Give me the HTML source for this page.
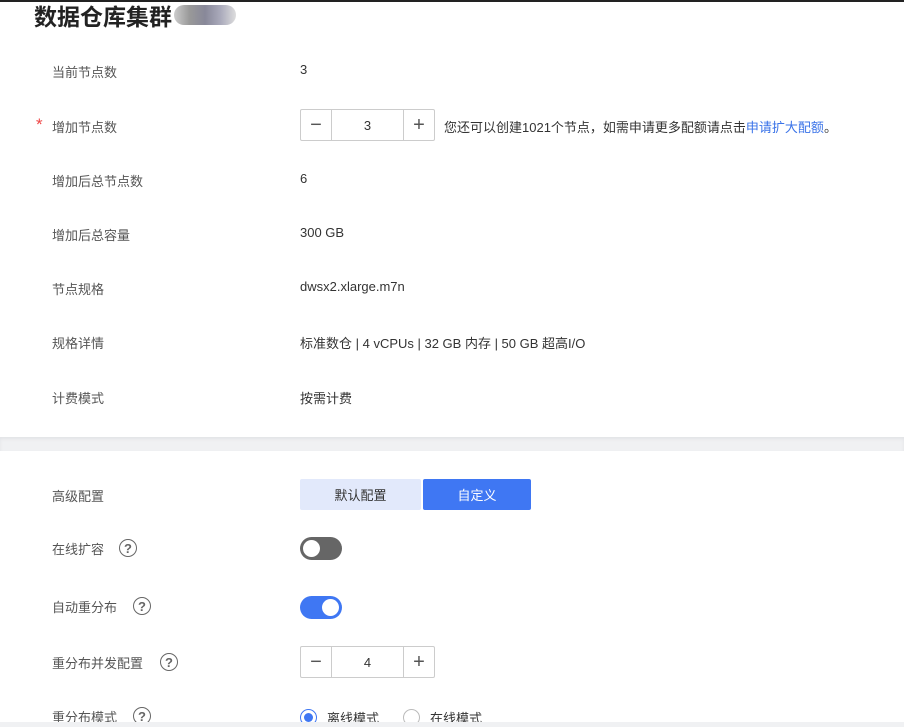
<!DOCTYPE html>
<html><head><meta charset="utf-8"><style>
*{margin:0;padding:0;box-sizing:border-box}
body{width:904px;height:727px;overflow:hidden;background:#fff;font-family:"Liberation Sans","Noto Sans CJK SC",sans-serif;font-size:13px;color:#333;position:relative}
.a{position:absolute;white-space:nowrap}
.l{left:52px;color:#555}
.v{left:300px;color:#333}
.num{position:absolute;left:300px;width:135px;height:32px;border:1px solid #ccc;border-radius:2px;display:flex}
.num span{display:flex;align-items:center;justify-content:center}
.num .b{width:30px;font-size:20px;color:#555}
.num .m{flex:1;border-left:1px solid #ccc;border-right:1px solid #ccc;font-size:13px}
.q{position:absolute;width:18px;height:18px;border:1.8px solid #666;border-radius:50%;font-size:13px;font-weight:bold;color:#666;display:flex;align-items:center;justify-content:center;line-height:1}
.tg{position:absolute;left:300px;width:42px;height:23px;border-radius:12px}
.tg i{position:absolute;top:3px;width:17px;height:17px;border-radius:50%;background:#fff}
</style></head><body>
<div class="a" style="left:0;top:0;width:904px;height:2px;background:#222"></div>
<div class="a" style="left:34px;top:-2px;font-size:23px;font-weight:bold;color:#222">数据仓库集群</div>
<div class="a" style="left:174px;top:5px;width:62px;height:20px;border-radius:10px;background:linear-gradient(90deg,#ccc,#999,#889,#aab,#ddd)"></div>
<div class="a l" style="top:62px">当前节点数</div><div class="a v" style="top:62px">3</div>
<div class="a" style="left:36px;top:115px;color:#e44;font-size:17px">*</div><div class="a l" style="top:117px">增加节点数</div>
<div class="num" style="top:109px"><span class="b">−</span><span class="m">3</span><span class="b">+</span></div>
<div class="a" style="left:444px;top:117px">您还可以创建1021个节点，如需申请更多配额请点击<span style="color:#3a73e8">申请扩大配额</span>。</div>
<div class="a l" style="top:171px">增加后总节点数</div><div class="a v" style="top:171px">6</div>
<div class="a l" style="top:225px">增加后总容量</div><div class="a v" style="top:225px">300 GB</div>
<div class="a l" style="top:279px">节点规格</div><div class="a v" style="top:279px">dwsx2.xlarge.m7n</div>
<div class="a l" style="top:333px">规格详情</div><div class="a v" style="top:333px">标准数仓 | 4 vCPUs | 32 GB 内存 | 50 GB 超高I/O</div>
<div class="a l" style="top:388px">计费模式</div><div class="a v" style="top:388px">按需计费</div>
<div class="a" style="left:0;top:437px;width:904px;height:14px;background:#f0f1f3;box-shadow:inset 0 2px 3px #e2e3e6"></div>
<div class="a l" style="top:486px">高级配置</div>
<div class="a" style="left:300px;top:479px;width:121px;height:31px;background:#e2e9fb;border-radius:2px;display:flex;align-items:center;justify-content:center">默认配置</div>
<div class="a" style="left:423px;top:479px;width:108px;height:31px;background:#3f77f3;color:#fff;border-radius:2px;display:flex;align-items:center;justify-content:center">自定义</div>
<div class="a l" style="top:539px">在线扩容</div><div class="q" style="left:119px;top:539px">?</div>
<div class="tg" style="top:537px;background:#666"><i style="left:3px"></i></div>
<div class="a l" style="top:597px">自动重分布</div><div class="q" style="left:133px;top:597px">?</div>
<div class="tg" style="top:596px;background:#3f77f3"><i style="left:22px"></i></div>
<div class="a l" style="top:653px">重分布并发配置</div><div class="q" style="left:160px;top:653px">?</div>
<div class="num" style="top:646px"><span class="b">−</span><span class="m">4</span><span class="b">+</span></div>
<div class="a l" style="top:707px">重分布模式</div><div class="q" style="left:133px;top:707px">?</div>
<div class="a" style="left:300px;top:709px;width:17px;height:17px;border:1px solid #3f77f3;border-radius:50%"><div style="margin:3px;width:9px;height:9px;border-radius:50%;background:#3f77f3"></div></div>
<div class="a" style="left:327px;top:708px">离线模式</div>
<div class="a" style="left:403px;top:709px;width:17px;height:17px;border:1px solid #bbb;border-radius:50%"></div>
<div class="a" style="left:430px;top:708px">在线模式</div>
<div class="a" style="left:0;top:722px;width:904px;height:5px;background:#f0f1f3"></div>
</body></html>
